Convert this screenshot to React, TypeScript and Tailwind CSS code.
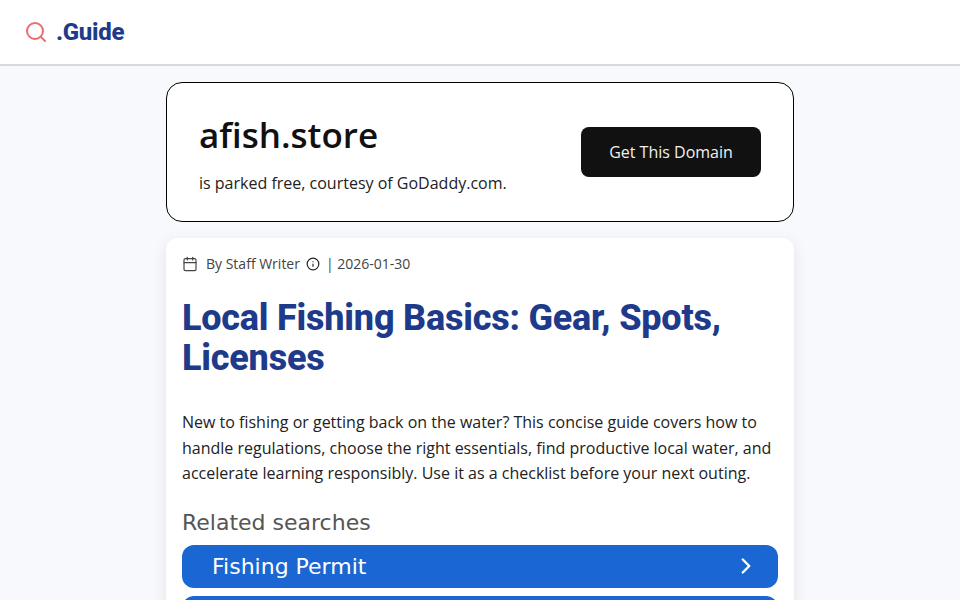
import { Calendar, ChevronRight, Info, Search } from 'lucide-react';

const related = ['Fishing Permit', 'Fishing Gear Checklist'];

export default function App() {
  return (
    <div className="h-[600px] overflow-hidden bg-[#f8f9fc] font-['Open_Sans',sans-serif]">
      <header className="flex h-[66px] items-center border-b-2 border-[#d9d9dc] bg-white pl-6">
        <Search className="h-6 w-6 text-[#ee6b6e]" strokeWidth={2} />
        <span className="ml-[8px] font-['Roboto',sans-serif] text-2xl font-extrabold tracking-[-0.3px] text-[#1e3a8a]">
          .Guide
        </span>
      </header>

      <main className="mx-auto w-[628px] pt-4">
        <section className="flex h-[140px] items-center justify-between rounded-2xl border border-black bg-white px-8">
          <div>
            <h2 className="text-[35px] leading-[50px] font-semibold text-[#111]">afish.store</h2>
            <p className="mt-[11px] text-base leading-6 text-[#222]">is parked free, courtesy of GoDaddy.com.</p>
          </div>
          <button className="h-[50px] w-[180px] rounded-lg bg-[#111] text-base text-[#f0f0f0]">Get This Domain</button>
        </section>

        <article className="mt-4 rounded-xl bg-white px-4 pt-4 shadow-[0_4px_16px_rgba(0,0,0,0.09)]">
          <div className="flex h-5 items-center text-sm text-[#444]">
            <Calendar className="h-4 w-4" strokeWidth={1.75} />
            <span className="ml-2">By Staff Writer</span>
            <Info className="ml-[6px] h-[14px] w-[14px] text-[#222]" strokeWidth={2} />
            <span className="ml-[6px]">| 2026-01-30</span>
          </div>

          <h1 className="mt-[24px] font-['Roboto',sans-serif] text-[36px] leading-[40px] font-extrabold tracking-[-0.22px] text-[#1e3a8a]">
            Local Fishing Basics: Gear, Spots, Licenses
          </h1>

          <p className="mt-8 text-base leading-[25.6px] text-[#222]">
            New to fishing or getting back on the water? This concise guide covers how to handle regulations, choose the
            right essentials, find productive local water, and accelerate learning responsibly. Use it as a checklist
            before your next outing.
          </p>

          <h3 className="mt-[22px] font-['DejaVu_Sans',sans-serif] text-[22px] leading-7 text-[#555]">Related searches</h3>

          <div className="mt-2 flex flex-col gap-2">
            {related.map((label) => (
              <a
                key={label}
                className="flex h-[43px] items-center justify-between rounded-xl bg-[#1a66d2] pr-[19px] pl-[30px] font-['DejaVu_Sans',sans-serif] text-[22px] text-white"
              >
                {label}
                <ChevronRight className="h-[26px] w-[26px]" strokeWidth={2.25} />
              </a>
            ))}
          </div>
        </article>
      </main>
    </div>
  );
}
